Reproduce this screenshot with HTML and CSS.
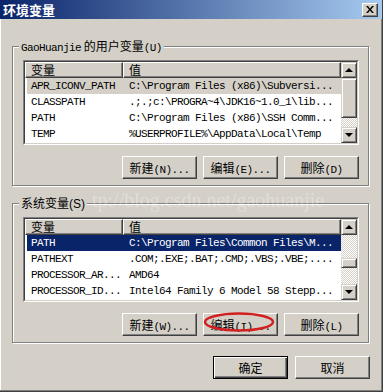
FILE: index.html
```html
<!DOCTYPE html>
<html lang="zh-CN">
<head>
    <meta charset="UTF-8">
    <title>环境变量</title>
    <link rel="stylesheet" href="styles.css">
</head>
<body>

<div class="window">
    <div class="titlebar">
        <span class="title">环境变量</span>
        <span class="close">
            <svg width="8" height="7" viewBox="0 0 8 7"><path d="M0 0h2l2 2.5L6 0h2L5 3.5 8 7H6L4 4.5 2 7H0l3-3.5z" fill="#000"/></svg>
        </span>
    </div>

    <div class="content">
        <div class="group">
            <div class="group-label"><span class="m">GaoHuanjie</span> 的用户变量<span class="m">(U)</span></div>
            <div class="list">
                <div class="list-inner">
                    <div class="cols">
                        <div class="head"><span class="hc c1">变量</span><span class="hc c2">值</span></div>
                        <div class="row inactive"><span class="c1 m">APR_ICONV_PATH</span><span class="c2 m">C:\Program Files (x86)\Subversi...</span></div>
                        <div class="row"><span class="c1 m">CLASSPATH</span><span class="c2 m">.;.;c:\PROGRA~4\JDK16~1.0_1\lib...</span></div>
                        <div class="row"><span class="c1 m">PATH</span><span class="c2 m">C:\Program Files (x86)\SSH Comm...</span></div>
                        <div class="row"><span class="c1 m">TEMP</span><span class="c2 m">%USERPROFILE%\AppData\Local\Temp</span></div>
                    </div>
                    <div class="scrollbar">
                        <div class="sb-btn"><i class="arrow up"></i></div>
                        <div class="sb-thumb" style="height: 40px"></div>
                        <div class="sb-track" style="height: 9px"></div>
                        <div class="sb-btn"><i class="arrow down"></i></div>
                    </div>
                </div>
            </div>
            <div class="buttons">
                <button class="btn">新建<span class="m">(N)...</span></button>
                <button class="btn">编辑<span class="m">(E)...</span></button>
                <button class="btn">删除<span class="m">(D)</span></button>
            </div>
        </div>

        <div class="group second">
            <div class="group-label">系统变量<span class="paren">(S)</span></div>
            <div class="list">
                <div class="list-inner">
                    <div class="cols">
                        <div class="head"><span class="hc c1">变量</span><span class="hc c2">值</span></div>
                        <div class="row selected"><span class="c1 m">PATH</span><span class="c2 m">C:\Program Files\Common Files\M...</span></div>
                        <div class="row"><span class="c1 m">PATHEXT</span><span class="c2 m">.COM;.EXE;.BAT;.CMD;.VBS;.VBE;....</span></div>
                        <div class="row"><span class="c1 m">PROCESSOR_AR...</span><span class="c2 m">AMD64</span></div>
                        <div class="row"><span class="c1 m">PROCESSOR_ID...</span><span class="c2 m">Intel64 Family 6 Model 58 Stepp...</span></div>
                    </div>
                    <div class="scrollbar">
                        <div class="sb-btn"><i class="arrow up"></i></div>
                        <div class="sb-track" style="height: 23px"></div>
                        <div class="sb-thumb" style="height: 10px"></div>
                        <div class="sb-track" style="height: 16px"></div>
                        <div class="sb-btn"><i class="arrow down"></i></div>
                    </div>
                </div>
            </div>
            <div class="buttons">
                <button class="btn">新建<span class="m">(W)...</span></button>
                <button class="btn">编辑<span class="m">(I)...</span></button>
                <button class="btn">删除<span class="m">(L)</span></button>
            </div>
        </div>

        <div class="footer">
            <button class="btn default">确定</button>
            <button class="btn">取消</button>
        </div>
    </div>

    <!-- watermark from the original screenshot, its start hidden behind the group label -->
    <div class="watermark">tp://blog.csdn.net/gaohuanjie</div>
    <svg class="circle" width="76" height="24" viewBox="0 0 76 24"><ellipse cx="37" cy="11" rx="34" ry="8.5" fill="none" stroke="#d21f1f" stroke-width="2.5"/></svg>
</div>

</body>
</html>
```

FILE: styles.css
```css
body {
    margin: 0;
    background: #d4d0c8;
    font: 12px "Noto Sans CJK SC", sans-serif;
    color: #000;
}
.window {
    position: relative;
    height: 392px;
    box-sizing: border-box;
    border-right: 1px solid #404040;
    border-bottom: 1px solid #404040;
    box-shadow: inset -1px -1px #808080, inset 1px 0 #fff;
}
.m {
    font-family: "Liberation Mono", monospace;
    font-size: 11px;
    letter-spacing: -0.6px;
}
.titlebar {
    height: 19px;
    display: flex;
    align-items: center;
    justify-content: space-between;
    padding-left: 3px;
    background: linear-gradient(to right, #0a246a, #a6caf0);
}
.title {
    color: #fff;
    font-size: 13px;
    font-weight: bold;
    line-height: 19px;
}
.close {
    width: 16px;
    height: 14px;
    box-sizing: border-box;
    margin-right: 4px;
    display: flex;
    align-items: center;
    justify-content: center;
    background: #d4d0c8;
    border: 1px solid;
    border-color: #fff #404040 #404040 #fff;
    box-shadow: inset -1px -1px #808080;
}
.content {
    padding: 27px 13px 0 12px;
}
.group {
    position: relative;
    border: 1px solid #808080;
    box-shadow: inset 1px 1px #fff, 1px 1px #fff;
    padding: 13px 9px 6px 10px;
}
.group.second {
    margin-top: 17px;
}
.group-label {
    position: absolute;
    top: -9px;
    left: 6px;
    padding: 0 2px;
    line-height: 16px;
    background: #d4d0c8;
}
.paren {
    font-family: "Liberation Sans", sans-serif;
}
.list {
    height: 85px;
    box-sizing: border-box;
    border: 1px solid;
    border-color: #808080 #fff #fff #808080;
}
.list-inner {
    height: 100%;
    box-sizing: border-box;
    display: flex;
    background: #fff;
    border: 1px solid;
    border-color: #404040 #d4d0c8 #d4d0c8 #404040;
}
.cols {
    flex: 1;
    min-width: 0;
    overflow: hidden;
}
.head {
    display: flex;
    height: 16px;
}
.hc {
    box-sizing: border-box;
    height: 16px;
    border: 1px solid;
    border-color: #fff #404040 #404040 #fff;
    box-shadow: inset -1px -1px #808080;
    background: #d4d0c8;
    padding-left: 5px;
    line-height: 13px;
}
.hc.c1 {
    width: 98px;
    flex: none;
}
.hc.c2 {
    flex: 1;
}
.row {
    display: flex;
    height: 16px;
    line-height: 16px;
    margin-left: 2px;
    white-space: nowrap;
}
.row .c1 {
    width: 96px;
    flex: none;
    padding-left: 4px;
    box-sizing: border-box;
    overflow: hidden;
}
.row .c2 {
    padding-left: 6px;
}
.row.inactive {
    background: #d4d0c8;
}
.row.selected {
    background: #0a246a;
    color: #fff;
}
.scrollbar {
    width: 16px;
    flex: none;
    display: flex;
    flex-direction: column;
}
.sb-btn, .sb-thumb {
    box-sizing: border-box;
    background: #d4d0c8;
    border: 1px solid;
    border-color: #d4d0c8 #404040 #404040 #d4d0c8;
    box-shadow: inset 1px 1px #fff, inset -1px -1px #808080;
}
.sb-btn {
    height: 16px;
    display: flex;
    align-items: center;
    justify-content: center;
}
.sb-track {
    background: repeating-conic-gradient(#fff 0 25%, #d4d0c8 0 50%) 0 0 / 2px 2px;
}
.arrow {
    width: 0;
    height: 0;
    border-left: 4px solid transparent;
    border-right: 4px solid transparent;
}
.arrow.up {
    border-bottom: 4px solid #000;
}
.arrow.down {
    border-top: 4px solid #000;
}
.buttons {
    display: flex;
    justify-content: flex-end;
    gap: 6px;
    margin-top: 11px;
}
.btn {
    width: 75px;
    height: 23px;
    box-sizing: border-box;
    padding: 0;
    font: inherit;
    color: #000;
    background: #d4d0c8;
    border: 1px solid;
    border-color: #fff #404040 #404040 #fff;
    box-shadow: inset -1px -1px #808080;
}
.btn.default {
    border-color: #000;
    box-shadow: inset 1px 1px #fff, inset -1px -1px #404040, inset -2px -2px #808080;
}
.footer {
    display: flex;
    justify-content: flex-end;
    gap: 7px;
    margin-top: 13px;
    margin-right: -1px;
}
.watermark {
    position: absolute;
    left: 92px;
    top: 189px;
    font: 20px "Liberation Serif", serif;
    color: rgba(255, 255, 255, 0.3);
    pointer-events: none;
}
.circle {
    position: absolute;
    left: 202px;
    top: 311px;
}
```
